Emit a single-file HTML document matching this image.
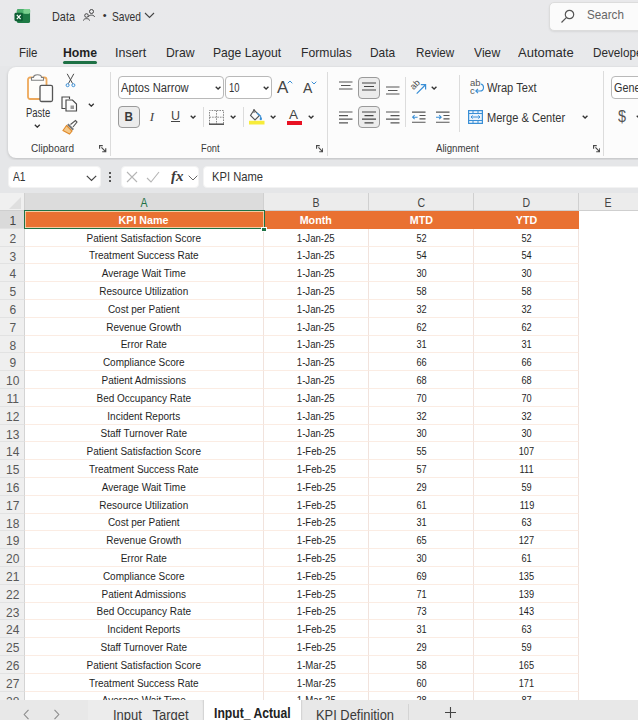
<!DOCTYPE html>
<html><head><meta charset="utf-8"><title>Excel</title>
<style>
*{box-sizing:border-box;margin:0;padding:0}
html,body{width:638px;height:720px;overflow:hidden;background:#e6e7e9;font-family:"Liberation Sans",sans-serif;color:#242424}
.abs{position:absolute}
#title{position:absolute;left:0;top:0;width:638px;height:66px;background:linear-gradient(#e9e9eb,#e8e9eb)}
#search{position:absolute;left:548.5px;top:1.5px;width:100px;height:29px;background:#fbfbfb;border:1px solid #dcdcdc;border-radius:5px;box-shadow:0 1px 2px rgba(0,0,0,.08)}
.t{position:absolute;white-space:nowrap;line-height:1}
#tabs .t{font-size:13px;top:46px;color:#2b2b2b}
#ribbon{position:absolute;left:8px;top:67px;width:640px;height:91px;background:#fcfcfc;border-radius:8px;box-shadow:0 1px 3px rgba(0,0,0,.18)}
.sep{position:absolute;width:1px;background:#dcdcdc}
.glabel{position:absolute;font-size:11px;color:#3a3a3a;top:143px;line-height:1;white-space:nowrap}
.box{position:absolute;background:#fff;border:1px solid #b9b9b9;border-radius:4px}
.btnsel{position:absolute;background:#ececec;border:1px solid #9a9a9a;border-radius:4px}
#fbar{position:absolute;left:0;top:160px;width:638px;height:33px;background:#e5e6e8}
#grid{position:absolute;left:0;top:193px;width:638px;height:507px;background:#fff;overflow:hidden}
#colh{position:absolute;left:0;top:0;width:638px;height:18px;background:#ececec}
#colh div{position:absolute;top:0;height:18px;font-size:12px;line-height:20.5px;text-align:center;color:#444;border-right:1px solid #d0d0d0;border-bottom:1px solid #cfcfcf}
#colh i{font-style:normal;display:inline-block;transform:scaleX(.88)}
#rows{position:absolute;left:0;top:18px;width:638px}
.r{position:relative;width:638px;height:17.8px}
.hdr .c{background:#e97132;color:#fff;font-weight:bold;border-color:#e97132}
.hdr .rh{background:#dadada;color:#444}
.rh{position:absolute;left:0;top:0;width:24.5px;padding-left:2px;height:100%;background:#efefef;border-bottom:1px solid #e2e2e2;border-right:1px solid #d4d4d4;font-size:12px;line-height:20.8px;text-align:center;color:#585858}
.c{position:absolute;top:0;height:100%;border-right:1px solid #f1e3dd;border-bottom:1px solid #fbece3;font-size:10px;line-height:18.6px;text-align:center;color:#1f1f1f;white-space:nowrap;overflow:hidden}
.c span{display:inline-block;position:relative;top:.9px;transform:scaleX(1.0)}
.c.b span{transform:scaleX(.96)}
.c.n span{transform:scaleX(.92);left:.5px}
.hdr .c{font-size:10.5px}
.hdr .c span{transform:scaleX(1.02);top:-.1px}
.c.a{left:24.5px;width:239.5px}
.c.b{left:264px;width:105px}
.c.n{width:105px}
.r .c.n:nth-of-type(4){left:369px}
.r .c.n:nth-of-type(5){left:474px}
#sheetbar{position:absolute;left:0;top:700px;width:638px;height:20px;background:#e8e8e8;overflow:hidden}
</style></head><body>
<div id="title">
  <!-- excel icon -->
  <svg class="abs" style="left:13.5px;top:7.5px" width="17" height="17" viewBox="0 0 18 18">
    <rect x="3" y="1" width="14" height="15" rx="2" fill="#1e7a45"/>
    <rect x="3" y="1" width="14" height="5" rx="2" fill="#4caf6e"/>
    <rect x="10" y="1" width="7" height="5" rx="1.5" fill="#7bd08f"/>
    <rect x="0.5" y="5" width="9" height="9" rx="1.5" fill="#0f5f35"/>
    <path d="M3 7.2 L7 11.8 M7 7.2 L3 11.8" stroke="#fff" stroke-width="1.3"/>
  </svg>
  <div class="t" style="left:52px;top:9.5px;font-size:13px;color:#333;transform:scaleX(0.837);transform-origin:0 50%">Data</div>
  <svg class="abs" style="left:82px;top:8px" width="14" height="14" viewBox="0 0 14 14" fill="none" stroke="#444" stroke-width="1">
    <circle cx="9.5" cy="3.5" r="2"/><path d="M6.5 9 C6.5 6.5 12.5 6.5 12.5 9"/>
    <circle cx="4.5" cy="7.5" r="1.8"/><path d="M1.5 12.5 C1.5 10 7.5 10 7.5 12.5"/>
  </svg>
  <div class="t" style="left:102.8px;top:9.5px;font-size:11px;color:#333">&#8226;</div>
  <div class="t" style="left:112px;top:9.5px;font-size:13px;color:#333;transform:scaleX(0.786);transform-origin:0 50%">Saved</div>
  <svg class="abs" style="left:144px;top:12px" width="11" height="7" viewBox="0 0 11 7" fill="none" stroke="#444" stroke-width="1.1"><path d="M1 1 L5.5 5.5 L10 1"/></svg>
  <div id="search"></div>
  <svg class="abs" style="left:560px;top:7.5px" width="16" height="16" viewBox="0 0 16 16" fill="none" stroke="#555" stroke-width="1.2"><circle cx="9.5" cy="6.5" r="4.2"/><path d="M6.3 9.7 L1.5 14.5"/></svg>
  <div class="t" style="left:587px;top:8px;font-size:13px;color:#666;transform:scaleX(0.896);transform-origin:0 50%">Search</div>
</div>
<div id="tabs">
  <div class="t" style="left:19px;transform:scaleX(0.883);transform-origin:0 50%">File</div>
  <div class="t" style="left:62.7px;font-weight:bold;color:#1f1f1f;transform:scaleX(0.944);transform-origin:0 50%">Home</div>
  <div class="abs" style="left:62.7px;top:61px;width:34px;height:2.6px;border-radius:2px;background:#1e7145"></div>
  <div class="t" style="left:114.8px;transform:scaleX(0.960);transform-origin:0 50%">Insert</div>
  <div class="t" style="left:165.5px;transform:scaleX(0.939);transform-origin:0 50%">Draw</div>
  <div class="t" style="left:212.6px;transform:scaleX(0.934);transform-origin:0 50%">Page Layout</div>
  <div class="t" style="left:300.9px;transform:scaleX(0.936);transform-origin:0 50%">Formulas</div>
  <div class="t" style="left:370.2px;transform:scaleX(0.914);transform-origin:0 50%">Data</div>
  <div class="t" style="left:416px;transform:scaleX(0.896);transform-origin:0 50%">Review</div>
  <div class="t" style="left:473.8px;transform:scaleX(0.937);transform-origin:0 50%">View</div>
  <div class="t" style="left:518px;transform:scaleX(1.001);transform-origin:0 50%">Automate</div>
  <div class="t" style="left:593px;transform:scaleX(.9);transform-origin:0 50%">Developer</div>
</div>
<div id="ribbon"></div>
<div id="rb">
  <!-- Clipboard group -->
  <svg class="abs" style="left:26px;top:73px" width="28" height="30" viewBox="0 0 28 30" fill="none">
    <rect x="2" y="4.5" width="18.5" height="21.5" rx="2" stroke="#eea85a" stroke-width="1.8" fill="#fffdfa"/>
    <path d="M7.5 4.5 C7.5 .8 15.5 .8 15.5 4.5 L17.5 4.5 L17.5 7.3 L5.5 7.3 L5.5 4.5 Z" fill="#fcfcfc" stroke="#808080" stroke-width="1.1"/>
    <rect x="14" y="12.3" width="12.5" height="16.2" rx="1.5" fill="#fcfcfc" stroke="#555" stroke-width="1.3"/>
  </svg>
  <div class="t" style="left:25.8px;top:107px;font-size:12px;color:#333;transform:scaleX(0.789);transform-origin:0 50%">Paste</div>
  <svg class="abs" style="left:34px;top:124.3px" width="6.6" height="4.2" viewBox="0 0 8 5" fill="none" stroke="#333" stroke-width="1.6"><path d="M1 .8 L4 3.8 L7 .8"/></svg>
  <!-- scissors -->
  <svg class="abs" style="left:64.5px;top:73px" width="11" height="15" viewBox="0 0 11 15" fill="none">
    <path d="M2.2 .8 L7.6 10.6 M8.8 .8 L3.4 10.6" stroke="#4a4a4a" stroke-width="1"/>
    <circle cx="2.6" cy="12.2" r="1.5" stroke="#3a8fd6" stroke-width="1"/><circle cx="8.4" cy="12.2" r="1.5" stroke="#3a8fd6" stroke-width="1"/>
  </svg>
  <!-- copy -->
  <svg class="abs" style="left:61px;top:96px" width="17" height="16" viewBox="0 0 17 16" fill="none" stroke="#484848" stroke-width="1.15">
    <path d="M4.5 12.5 L1 12.5 L1 1 L8.5 1 L8.5 3"/>
    <path d="M5 4 L11.5 4 L15.5 8 L15.5 15 L5 15 Z" fill="#fcfcfc"/>
    <rect x="9.5" y="9.5" width="3.5" height="3.5" fill="#9a9a9a" stroke="none"/>
  </svg>
  <svg class="abs" style="left:88px;top:102.5px" width="6.6" height="4.2" viewBox="0 0 8 5" fill="none" stroke="#333" stroke-width="1.6"><path d="M1 .8 L4 3.8 L7 .8"/></svg>
  <!-- format painter -->
  <svg class="abs" style="left:62px;top:119px" width="16" height="16" viewBox="0 0 16 16" fill="none">
    <path d="M8.5 5.5 L13.5 1.5 L15 3 L11 8" stroke="#555" stroke-width="1.1" fill="#fcfcfc"/>
    <path d="M6.5 4.5 L12 10 L10.5 11.5 L5 6 Z" fill="#777"/>
    <path d="M4.5 6.5 L10 12 L7.5 15 L1 11.5 Z" fill="#f6c98a" stroke="#e08b2c" stroke-width="1.1"/>
  </svg>
  <div class="glabel" style="left:31px;transform:scaleX(0.913);transform-origin:0 50%">Clipboard</div>
  <svg class="abs lch" style="left:99px;top:145px" width="7.5" height="7.5" viewBox="0 0 8 8" fill="none" stroke="#4a4a4a" stroke-width="1.25"><path d="M.6 4 L.6 .6 L4 .6 M2.6 2.6 L7 7 M7.2 3.4 L7.2 7.2 L3.4 7.2"/></svg>
  <div class="sep" style="left:110px;top:72px;height:84px"></div>

  <!-- Font group -->
  <div class="box" style="left:118px;top:76.3px;width:106px;height:22.6px"></div>
  <div class="t" style="left:121px;top:82px;font-size:12px;color:#333;transform:scaleX(0.931);transform-origin:0 50%">Aptos Narrow</div>
  <svg class="abs" style="left:215px;top:86px" width="6.2" height="4.4" viewBox="0 0 7 5" fill="none" stroke="#333" stroke-width="1.5"><path d="M.8 .8 L3.5 3.5 L6.2 .8"/></svg>
  <div class="box" style="left:225.3px;top:76.3px;width:46.5px;height:22.6px"></div>
  <div class="t" style="left:229px;top:82px;font-size:12px;color:#333;transform:scaleX(0.786);transform-origin:0 50%">10</div>
  <svg class="abs" style="left:263px;top:86px" width="6.2" height="4.4" viewBox="0 0 7 5" fill="none" stroke="#333" stroke-width="1.5"><path d="M.8 .8 L3.5 3.5 L6.2 .8"/></svg>
  <div class="t" style="left:277px;top:79px;font-size:17px;color:#444">A</div>
  <svg class="abs" style="left:287px;top:80px" width="6" height="4" viewBox="0 0 6 4" fill="none" stroke="#3a8fd6" stroke-width="1"><path d="M.7 3.3 L3 1 L5.3 3.3"/></svg>
  <div class="t" style="left:303px;top:81px;font-size:14px;color:#444">A</div>
  <svg class="abs" style="left:310.5px;top:80.5px" width="6" height="4" viewBox="0 0 6 4" fill="none" stroke="#3a8fd6" stroke-width="1"><path d="M.7 .7 L3 3 L5.3 .7"/></svg>

  <div class="btnsel" style="left:118px;top:106px;width:22px;height:22px"></div>
  <div class="t" style="left:124px;top:110px;font-size:13px;font-weight:bold;color:#3a3a3a;transform:scaleX(.9);transform-origin:50% 50%">B</div>
  <div class="t" style="left:149.8px;top:110px;font-size:13px;font-style:italic;font-family:'Liberation Serif',serif;color:#444">I</div>
  <div class="t" style="left:171px;top:110px;font-size:12.5px;text-decoration:underline;color:#444">U</div>
  <svg class="abs" style="left:190px;top:115px" width="6.2" height="4.4" viewBox="0 0 7 5" fill="none" stroke="#333" stroke-width="1.5"><path d="M.8 .8 L3.5 3.5 L6.2 .8"/></svg>
  <div class="sep" style="left:203px;top:107px;height:20px"></div>
  <svg class="abs" style="left:209px;top:110px" width="15" height="15" viewBox="0 0 15 15" fill="none"><path d="M.5 14 V.5 H14.5 V14 M7.5 .5 V14 M.5 7.2 H14.5" stroke="#8a8a8a" stroke-width="1" stroke-dasharray="1.6 1"/><path d="M0 14.2 H15" stroke="#444" stroke-width="1.4"/></svg>
  <svg class="abs" style="left:230px;top:115px" width="6.2" height="4.4" viewBox="0 0 7 5" fill="none" stroke="#333" stroke-width="1.5"><path d="M.8 .8 L3.5 3.5 L6.2 .8"/></svg>
  <div class="sep" style="left:243px;top:107px;height:20px"></div>
  <!-- fill bucket -->
  <svg class="abs" style="left:248px;top:108px" width="17" height="17" viewBox="0 0 17 17" fill="none">
    <path d="M6 2 L11.5 7.5 L7 12 L2.5 7.5 Z" stroke="#555" stroke-width="1.1" fill="#fcfcfc"/>
    <path d="M6 1 L6 5" stroke="#555" stroke-width="1"/>
    <path d="M12.5 8 C14 10 14.5 11 13.5 12 C12.5 12.7 11.5 12 11.7 10.8 Z" fill="#3a8fd6"/>
    <path d="M9 5 L13 8.5" stroke="#3a8fd6" stroke-width="1.1"/>
    <rect x="1" y="12.8" width="15.5" height="3.7" fill="#f7ec3a"/>
  </svg>
  <svg class="abs" style="left:270px;top:115px" width="6.2" height="4.4" viewBox="0 0 7 5" fill="none" stroke="#333" stroke-width="1.5"><path d="M.8 .8 L3.5 3.5 L6.2 .8"/></svg>
  <div class="t" style="left:289px;top:108px;font-size:13.5px;color:#444">A</div>
  <div class="abs" style="left:287px;top:120.5px;width:14.5px;height:4px;background:#e81123"></div>
  <svg class="abs" style="left:308px;top:115px" width="6.2" height="4.4" viewBox="0 0 7 5" fill="none" stroke="#333" stroke-width="1.5"><path d="M.8 .8 L3.5 3.5 L6.2 .8"/></svg>
  <div class="glabel" style="left:201px;transform:scaleX(0.840);transform-origin:0 50%">Font</div>
  <svg class="abs lch" style="left:315.5px;top:145px" width="7.5" height="7.5" viewBox="0 0 8 8" fill="none" stroke="#4a4a4a" stroke-width="1.25"><path d="M.6 4 L.6 .6 L4 .6 M2.6 2.6 L7 7 M7.2 3.4 L7.2 7.2 L3.4 7.2"/></svg>
  <div class="sep" style="left:326.5px;top:72px;height:84px"></div>

  <!-- Alignment group -->
  <svg class="abs" style="left:339px;top:80.5px" width="14" height="10" viewBox="0 0 14 10" stroke="#555" stroke-width="1.2"><path d="M0 1 H13.5 M2 4.5 H11.5 M0 8 H13.5"/></svg>
  <div class="btnsel" style="left:358px;top:76.5px;width:22px;height:22px"></div>
  <svg class="abs" style="left:362px;top:82.2px" width="14" height="10" viewBox="0 0 14 10" stroke="#444" stroke-width="1.2"><path d="M0 1 H14 M2 4.5 H12 M0 8 H14"/></svg>
  <svg class="abs" style="left:386px;top:86px" width="14" height="10" viewBox="0 0 14 10" stroke="#555" stroke-width="1.2"><path d="M0 1 H13.5 M2 4.5 H11.5 M0 8 H13.5"/></svg>
  <div class="sep" style="left:405px;top:77px;height:50px"></div>
  <!-- orientation -->
  <svg class="abs" style="left:410px;top:78px" width="18" height="18" viewBox="0 0 18 18" fill="none">
    <text x="0" y="0" font-size="9" font-family="Liberation Sans" fill="#4a4a4a" transform="translate(3.4 12.2) rotate(-45)">ab</text>
    <path d="M6.7 15.6 L15.3 7 M10.8 6.6 L15.6 6.6 L15.6 11.4" stroke="#3a8fd6" stroke-width="1.2"/>
  </svg>
  <svg class="abs" style="left:430.5px;top:86px" width="6.2" height="4.4" viewBox="0 0 7 5" fill="none" stroke="#333" stroke-width="1.5"><path d="M.8 .8 L3.5 3.5 L6.2 .8"/></svg>
  <svg class="abs" style="left:339px;top:110.5px" width="14" height="13" viewBox="0 0 14 13" stroke="#555" stroke-width="1.2"><path d="M0 1 H13.5 M0 4.6 H9 M0 8.2 H13.5 M0 11.8 H9"/></svg>
  <div class="btnsel" style="left:358px;top:106px;width:22px;height:22px"></div>
  <svg class="abs" style="left:362px;top:110.5px" width="14" height="13" viewBox="0 0 14 13" stroke="#444" stroke-width="1.2"><path d="M0 1 H14 M2.5 4.6 H11.5 M0 8.2 H14 M2.5 11.8 H11.5"/></svg>
  <svg class="abs" style="left:386px;top:110.5px" width="14" height="13" viewBox="0 0 14 13" stroke="#555" stroke-width="1.2"><path d="M0 1 H13.5 M4.5 4.6 H13.5 M0 8.2 H13.5 M4.5 11.8 H13.5"/></svg>
  <!-- indent -->
  <svg class="abs" style="left:411.5px;top:110.5px" width="14" height="12.5" viewBox="0 0 15 13" fill="none"><path d="M0 1 H14.5 M8 4.6 H14.5 M8 8.2 H14.5 M0 11.8 H14.5" stroke="#555" stroke-width="1.2"/><path d="M6 6.4 H.8 M2.8 4.2 L.6 6.4 L2.8 8.6" stroke="#3a8fd6" stroke-width="1.1"/></svg>
  <svg class="abs" style="left:435.5px;top:110.5px" width="14" height="12.5" viewBox="0 0 15 13" fill="none"><path d="M0 1 H14.5 M8 4.6 H14.5 M8 8.2 H14.5 M0 11.8 H14.5" stroke="#555" stroke-width="1.2"/><path d="M0 6.4 H5.4 M3.4 4.2 L5.6 6.4 L3.4 8.6" stroke="#3a8fd6" stroke-width="1.1"/></svg>
  <div class="sep" style="left:458.5px;top:75px;height:57px"></div>
  <!-- wrap text -->
  <svg class="abs" style="left:469px;top:79px" width="16" height="17" viewBox="0 0 16 17" fill="none">
    <text x="1" y="7" font-size="9.5" font-family="Liberation Sans" fill="#555">ab</text>
    <text x="1" y="15" font-size="9.5" font-family="Liberation Sans" fill="#555">c</text>
    <path d="M12 5 C15.5 6 15.5 12 11 12 L7 12 M9 9.8 L6.8 12 L9 14.2" stroke="#3a8fd6" stroke-width="1.1"/>
  </svg>
  <div class="t" style="left:487px;top:82px;font-size:12px;color:#333;transform:scaleX(0.924);transform-origin:0 50%">Wrap Text</div>
  <!-- merge -->
  <svg class="abs" style="left:468px;top:110.4px" width="15" height="14" viewBox="0 0 15 14" fill="none">
    <rect x=".6" y=".6" width="13.8" height="12.8" stroke="#3a8fd6" stroke-width="1.2" fill="#eaf3fc"/>
    <path d="M.6 3.5 H14.4 M.6 10.5 H14.4 M5 .6 V3.5 M10 .6 V3.5 M5 10.5 V13.4 M10 10.5 V13.4" stroke="#3a8fd6" stroke-width="1"/>
    <path d="M3 7 H12 M4.6 5.4 L3 7 L4.6 8.6 M10.4 5.4 L12 7 L10.4 8.6" stroke="#3a8fd6" stroke-width="1"/>
  </svg>
  <div class="t" style="left:487px;top:111.6px;font-size:12px;color:#333;transform:scaleX(0.922);transform-origin:0 50%">Merge &amp; Center</div>
  <svg class="abs" style="left:581.5px;top:115px" width="6.2" height="4.4" viewBox="0 0 7 5" fill="none" stroke="#333" stroke-width="1.5"><path d="M.8 .8 L3.5 3.5 L6.2 .8"/></svg>
  <div class="glabel" style="left:436px;transform:scaleX(0.875);transform-origin:0 50%">Alignment</div>
  <svg class="abs lch" style="left:592.5px;top:145px" width="7.5" height="7.5" viewBox="0 0 8 8" fill="none" stroke="#4a4a4a" stroke-width="1.25"><path d="M.6 4 L.6 .6 L4 .6 M2.6 2.6 L7 7 M7.2 3.4 L7.2 7.2 L3.4 7.2"/></svg>
  <div class="sep" style="left:603px;top:71px;height:85px"></div>
  <!-- Number group (cut off) -->
  <div class="box" style="left:611px;top:76.3px;width:40px;height:22.6px"></div>
  <div class="t" style="left:614px;top:82px;font-size:12px;color:#333;transform:scaleX(0.899);transform-origin:0 50%">General</div>
  <div class="t" style="left:618px;top:108.5px;font-size:16px;color:#555;transform:scaleX(.9);transform-origin:0 50%">$</div>
  <svg class="abs" style="left:636.3px;top:115px" width="6.2" height="4.4" viewBox="0 0 7 5" fill="none" stroke="#333" stroke-width="1.5"><path d="M.8 .8 L3.5 3.5 L6.2 .8"/></svg>
</div>
<div id="fbar">
  <div class="box" style="left:8px;top:5.5px;width:93px;height:22px;border-color:#f3f3f3;border-radius:4px"></div>
  <div class="t" style="left:13px;top:10px;font-size:13px;color:#333;transform:scaleX(0.786);transform-origin:0 50%">A1</div>
  <svg class="abs" style="left:86px;top:14.5px" width="11" height="7" viewBox="0 0 11 7" fill="none" stroke="#444" stroke-width="1.2"><path d="M.8 .8 L5.5 5.5 L10.2 .8"/></svg>
  <div class="abs" style="left:109px;top:12px;width:2px;height:2px;background:#555;box-shadow:0 4px 0 #555,0 8px 0 #555"></div>
  <div class="box" style="left:121px;top:5.5px;width:78px;height:22px;border-color:#f3f3f3"></div>
  <svg class="abs" style="left:126px;top:11px" width="12" height="12" viewBox="0 0 12 12" fill="none" stroke="#b5b5b5" stroke-width="1.1"><path d="M1 1 L11 11 M11 1 L1 11"/></svg>
  <svg class="abs" style="left:146px;top:11px" width="14" height="12" viewBox="0 0 14 12" fill="none" stroke="#b5b5b5" stroke-width="1.1"><path d="M1 7 L5 11 L13 1"/></svg>
  <div class="t" style="left:171px;top:7.5px;font-size:15.5px;font-family:'Liberation Serif',serif;font-style:italic;font-weight:bold;color:#3a3a3a;transform:scaleX(0.967);transform-origin:0 50%">fx</div>
  <svg class="abs" style="left:187.5px;top:14.5px" width="10" height="6" viewBox="0 0 10 6" fill="none" stroke="#666" stroke-width="1"><path d="M.7 .7 L5 5 L9.3 .7"/></svg>
  <div class="box" style="left:203px;top:5.5px;width:445px;height:22px;border-color:#f3f3f3"></div>
  <div class="t" style="left:212px;top:10px;font-size:13px;color:#333;transform:scaleX(0.861);transform-origin:0 50%">KPI Name</div>
</div>
<div id="grid">
  <div id="colh">
    <div style="left:0;width:24.5px;background:#f0f0f0"><svg class="abs" style="left:9px;top:4px" width="12" height="12" viewBox="0 0 12 12"><path d="M12 0 V12 H0 Z" fill="#dfdfdf"/></svg></div>
    <div style="left:24.5px;width:239.5px;background:#dcdcdc;color:#1e7145;border-bottom:1px solid #1e7145"><i>A</i></div>
    <div style="left:264px;width:105px"><i>B</i></div>
    <div style="left:369px;width:105px"><i>C</i></div>
    <div style="left:474px;width:105px"><i>D</i></div>
    <div style="left:579px;width:59px;border-right:none"><i>E</i></div>
  </div>
  <div id="rows">
  <div class="r hdr"><div class="rh">1</div><div class="c a"><span>KPI Name</span></div><div class="c b"><span>Month</span></div><div class="c n"><span>MTD</span></div><div class="c n"><span>YTD</span></div></div>
<div class="r"><div class="rh">2</div><div class="c a"><span>Patient Satisfaction Score</span></div><div class="c b"><span>1-Jan-25</span></div><div class="c n"><span>52</span></div><div class="c n"><span>52</span></div></div>
<div class="r"><div class="rh">3</div><div class="c a"><span>Treatment Success Rate</span></div><div class="c b"><span>1-Jan-25</span></div><div class="c n"><span>54</span></div><div class="c n"><span>54</span></div></div>
<div class="r"><div class="rh">4</div><div class="c a"><span>Average Wait Time</span></div><div class="c b"><span>1-Jan-25</span></div><div class="c n"><span>30</span></div><div class="c n"><span>30</span></div></div>
<div class="r"><div class="rh">5</div><div class="c a"><span>Resource Utilization</span></div><div class="c b"><span>1-Jan-25</span></div><div class="c n"><span>58</span></div><div class="c n"><span>58</span></div></div>
<div class="r"><div class="rh">6</div><div class="c a"><span>Cost per Patient</span></div><div class="c b"><span>1-Jan-25</span></div><div class="c n"><span>32</span></div><div class="c n"><span>32</span></div></div>
<div class="r"><div class="rh">7</div><div class="c a"><span>Revenue Growth</span></div><div class="c b"><span>1-Jan-25</span></div><div class="c n"><span>62</span></div><div class="c n"><span>62</span></div></div>
<div class="r"><div class="rh">8</div><div class="c a"><span>Error Rate</span></div><div class="c b"><span>1-Jan-25</span></div><div class="c n"><span>31</span></div><div class="c n"><span>31</span></div></div>
<div class="r"><div class="rh">9</div><div class="c a"><span>Compliance Score</span></div><div class="c b"><span>1-Jan-25</span></div><div class="c n"><span>66</span></div><div class="c n"><span>66</span></div></div>
<div class="r"><div class="rh">10</div><div class="c a"><span>Patient Admissions</span></div><div class="c b"><span>1-Jan-25</span></div><div class="c n"><span>68</span></div><div class="c n"><span>68</span></div></div>
<div class="r"><div class="rh">11</div><div class="c a"><span>Bed Occupancy Rate</span></div><div class="c b"><span>1-Jan-25</span></div><div class="c n"><span>70</span></div><div class="c n"><span>70</span></div></div>
<div class="r"><div class="rh">12</div><div class="c a"><span>Incident Reports</span></div><div class="c b"><span>1-Jan-25</span></div><div class="c n"><span>32</span></div><div class="c n"><span>32</span></div></div>
<div class="r"><div class="rh">13</div><div class="c a"><span>Staff Turnover Rate</span></div><div class="c b"><span>1-Jan-25</span></div><div class="c n"><span>30</span></div><div class="c n"><span>30</span></div></div>
<div class="r"><div class="rh">14</div><div class="c a"><span>Patient Satisfaction Score</span></div><div class="c b"><span>1-Feb-25</span></div><div class="c n"><span>55</span></div><div class="c n"><span>107</span></div></div>
<div class="r"><div class="rh">15</div><div class="c a"><span>Treatment Success Rate</span></div><div class="c b"><span>1-Feb-25</span></div><div class="c n"><span>57</span></div><div class="c n"><span>111</span></div></div>
<div class="r"><div class="rh">16</div><div class="c a"><span>Average Wait Time</span></div><div class="c b"><span>1-Feb-25</span></div><div class="c n"><span>29</span></div><div class="c n"><span>59</span></div></div>
<div class="r"><div class="rh">17</div><div class="c a"><span>Resource Utilization</span></div><div class="c b"><span>1-Feb-25</span></div><div class="c n"><span>61</span></div><div class="c n"><span>119</span></div></div>
<div class="r"><div class="rh">18</div><div class="c a"><span>Cost per Patient</span></div><div class="c b"><span>1-Feb-25</span></div><div class="c n"><span>31</span></div><div class="c n"><span>63</span></div></div>
<div class="r"><div class="rh">19</div><div class="c a"><span>Revenue Growth</span></div><div class="c b"><span>1-Feb-25</span></div><div class="c n"><span>65</span></div><div class="c n"><span>127</span></div></div>
<div class="r"><div class="rh">20</div><div class="c a"><span>Error Rate</span></div><div class="c b"><span>1-Feb-25</span></div><div class="c n"><span>30</span></div><div class="c n"><span>61</span></div></div>
<div class="r"><div class="rh">21</div><div class="c a"><span>Compliance Score</span></div><div class="c b"><span>1-Feb-25</span></div><div class="c n"><span>69</span></div><div class="c n"><span>135</span></div></div>
<div class="r"><div class="rh">22</div><div class="c a"><span>Patient Admissions</span></div><div class="c b"><span>1-Feb-25</span></div><div class="c n"><span>71</span></div><div class="c n"><span>139</span></div></div>
<div class="r"><div class="rh">23</div><div class="c a"><span>Bed Occupancy Rate</span></div><div class="c b"><span>1-Feb-25</span></div><div class="c n"><span>73</span></div><div class="c n"><span>143</span></div></div>
<div class="r"><div class="rh">24</div><div class="c a"><span>Incident Reports</span></div><div class="c b"><span>1-Feb-25</span></div><div class="c n"><span>31</span></div><div class="c n"><span>63</span></div></div>
<div class="r"><div class="rh">25</div><div class="c a"><span>Staff Turnover Rate</span></div><div class="c b"><span>1-Feb-25</span></div><div class="c n"><span>29</span></div><div class="c n"><span>59</span></div></div>
<div class="r"><div class="rh">26</div><div class="c a"><span>Patient Satisfaction Score</span></div><div class="c b"><span>1-Mar-25</span></div><div class="c n"><span>58</span></div><div class="c n"><span>165</span></div></div>
<div class="r"><div class="rh">27</div><div class="c a"><span>Treatment Success Rate</span></div><div class="c b"><span>1-Mar-25</span></div><div class="c n"><span>60</span></div><div class="c n"><span>171</span></div></div>
<div class="r"><div class="rh">28</div><div class="c a"><span>Average Wait Time</span></div><div class="c b"><span>1-Mar-25</span></div><div class="c n"><span>28</span></div><div class="c n"><span>87</span></div></div>
  </div>
  <!-- selection border A1 -->
  <div class="abs" style="left:24px;top:16.8px;width:240.6px;height:19.6px;border:1.8px solid #1e7145;box-shadow:inset 0 0 0 .7px #f6e9c8"></div>
  <div class="abs" style="left:261.3px;top:33.6px;width:5.4px;height:5.4px;background:#1e7145;border:1px solid #fff"></div>
</div>
<div id="sheetbar">
  <svg class="abs" style="left:23px;top:9px" width="7" height="11" viewBox="0 0 7 11" fill="none" stroke="#8c8c8c" stroke-width="1.1"><path d="M5.5 .8 L1.2 5.5 L5.5 10.2"/></svg>
  <svg class="abs" style="left:53px;top:9px" width="7" height="11" viewBox="0 0 7 11" fill="none" stroke="#8c8c8c" stroke-width="1.1"><path d="M1.5 .8 L5.8 5.5 L1.5 10.2"/></svg>
  <div class="abs" style="left:88px;top:0;width:115px;height:22px;background:#ececec;border-radius:0 5px 0 0"></div>
  <div class="t" style="left:113.4px;top:8.2px;font-size:14px;color:#3a3a3a;transform:scaleX(0.928);transform-origin:0 50%">Input_ Target</div>
  <div class="abs" style="left:204px;top:-1px;width:96.5px;height:22px;background:#fff;border-radius:0 0 0 0;box-shadow:0 0 2px rgba(0,0,0,.25)"></div>
  <div class="t" style="left:214px;top:6px;font-size:14px;font-weight:bold;color:#222;transform:scaleX(0.870);transform-origin:0 50%">Input_ Actual</div>
  <div class="t" style="left:316.1px;top:8px;font-size:14px;color:#3a3a3a;transform:scaleX(0.920);transform-origin:0 50%">KPI Definition</div>
  <div class="abs" style="left:408px;top:4px;width:1px;height:16px;background:#d4d4d4"></div>
  <svg class="abs" style="left:445px;top:7px" width="11" height="11" viewBox="0 0 11 11" stroke="#444" stroke-width="1.1"><path d="M5.5 0 V11 M0 5.5 H11"/></svg>
</div>
</body></html>
